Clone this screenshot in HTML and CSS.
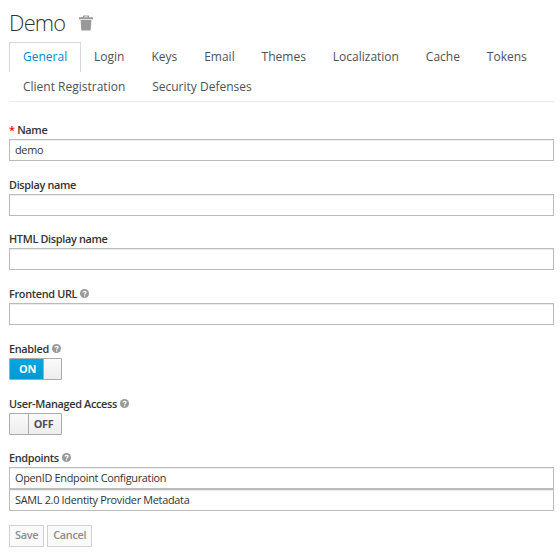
FILE: index.html
```
<!DOCTYPE html>
<html lang="en">
<head>
<meta charset="utf-8">
<title>Demo</title>
<link rel="stylesheet" href="styles.css">
</head>
<body>
<svg class="defs" width="0" height="0" aria-hidden="true">
  <symbol id="help" viewBox="0 0 9 9">
    <circle cx="4.5" cy="4.5" r="4.5" fill="#999"/>
    <path d="M3 3.5C3.1 1.9 6 1.9 6 3.5C6 4.5 4.6 4.4 4.6 5.5M4.6 6.3V7.4" fill="none" stroke="#fff" stroke-width="1.2"/>
  </symbol>
</svg>
<header class="title">
  <h1>Demo</h1>
  <svg class="trash" viewBox="0 0 14 16"><path d="M4 2.2V1Q4 .5 4.5 .5H9.5Q10 .5 10 1V2.2H14V4.2H0V2.2ZM5.2 2.2H8.8V1.5H5.2ZM1.6 5H12.4L11.7 15.5H2.3Z" fill="#999" fill-rule="evenodd"/></svg>
</header>
<nav class="tabs">
  <a class="tab active">General</a><a class="tab">Login</a><a class="tab">Keys</a><a class="tab">Email</a><a class="tab">Themes</a><a class="tab">Localization</a><a class="tab">Cache</a><a class="tab">Tokens</a><a class="tab">Client Registration</a><a class="tab">Security Defenses</a>
</nav>
<form>
  <div class="group"><label><span class="required">*</span> Name</label><div class="field">demo</div></div>
  <div class="group"><label>Display name</label><div class="field"></div></div>
  <div class="group"><label>HTML Display name</label><div class="field"></div></div>
  <div class="group"><label>Frontend URL<svg class="help"><use href="#help"/></svg></label><div class="field"></div></div>
  <div class="group"><label>Enabled<svg class="help"><use href="#help"/></svg></label><div class="switch on"><span class="state">ON</span><span class="knob"></span></div></div>
  <div class="group"><label>User-Managed Access<svg class="help"><use href="#help"/></svg></label><div class="switch off"><span class="knob"></span><span class="state">OFF</span></div></div>
  <div class="group endpoints"><label>Endpoints<svg class="help"><use href="#help"/></svg></label><div class="field">OpenID Endpoint Configuration</div><div class="field">SAML 2.0 Identity Provider Metadata</div></div>
  <div class="actions"><button type="button" disabled>Save</button><button type="button" disabled>Cancel</button></div>
</form>
</body>
</html>
```
FILE: styles.css
```
* { box-sizing: border-box; }
body {
  margin: 0;
  padding: 9px 6px 0 9px;
  background: #fff;
  color: #4d5258;
  font: 10.9px "Open Sans", sans-serif;
  letter-spacing: -.3px;
}
.defs { display: block; }
.title { display: flex; align-items: center; height: 28px; }
.title h1 {
  margin: 0;
  font-size: 21.8px;
  font-weight: 300;
  line-height: 28px;
  letter-spacing: -.75px;
  color: #333;
}
.trash { width: 14px; height: 16px; margin-left: 14px; }
.tabs {
  display: flex;
  flex-wrap: wrap;
  align-content: flex-start;
  height: 60px;
  margin-top: 5px;
  border-bottom: 1px solid #ebebeb;
}
.tab {
  height: 30px;
  margin-right: -1.08px;
  padding: 0 13px;
  border: 1px solid transparent;
  border-bottom: 0;
  font-size: 12px;
  line-height: 28px;
  letter-spacing: 0;
  color: #4d5258;
}
.tab.active { border-color: #d8d8d8; color: #0088ce; }
form { padding-top: 20px; }
.group { height: 54.73px; }
label {
  display: flex;
  align-items: center;
  height: 15px;
  margin-bottom: 2px;
  font-weight: 600;
  letter-spacing: -.33px;
  white-space: pre;
  color: #333;
}
.required { color: #f00; }
.help { width: 9px; height: 9px; margin-left: 3px; }
.field {
  height: 22px;
  padding: 0 5px;
  border: 1px solid #bbb;
  box-shadow: inset 0 1px 1px rgba(3, 3, 3, .075);
  line-height: 20px;
  color: #333;
}
.switch {
  display: flex;
  width: 53px;
  height: 22px;
  border: 1px solid #aaa;
  border-radius: 1px;
  line-height: 20px;
  font-weight: 700;
  text-align: center;
}
.state { flex: 1; }
.knob { background: linear-gradient(#fafafa, #ededed); }
.on .state { padding-left: 2px; background: linear-gradient(#00a8e1, #0099d3); color: #fff; }
.on .knob { width: 18px; border-left: 1px solid #aaa; }
.off .state { padding-right: 3px; background: linear-gradient(#fafafa, #ededed); }
.off .knob { width: 19px; border-right: 1px solid #aaa; }
.endpoints { height: 61px; }
.actions { display: flex; gap: 3px; margin-top: 14px; }
button {
  height: 22px;
  padding: 0 5px 2px;
  border: 1px solid #d1d1d1;
  background: #fafafa;
  font: 600 10.9px/18px "Open Sans", sans-serif;
  letter-spacing: -.3px;
  color: #8b8d8f;
}
```
